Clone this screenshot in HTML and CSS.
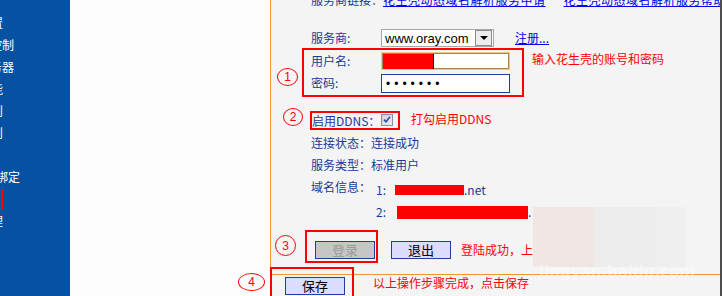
FILE: index.html
```html
<!DOCTYPE html>
<html lang="zh-CN">
<head>
<meta charset="utf-8">
<title>动态DNS</title>
<link rel="stylesheet" href="styles.css">
</head>
<body>
<div class="page">
  <nav class="sidebar">
    <div class="nav-item">无线设置</div>
    <div class="nav-item w14">家长控制</div>
    <div class="nav-item w14">DHCP服务器</div>
    <div class="nav-item">安全功能</div>
    <div class="nav-item">转发规则</div>
    <div class="nav-item">路由规则</div>
    <div class="nav-item"></div>
    <div class="nav-item w20">IP与MAC绑定</div>
    <div class="nav-item"><span class="nav-mark"></span></div>
    <div class="nav-item">系统管理</div>
  </nav>
  <div class="spacer"></div>
  <main class="panel">
    <div class="links-row">
      <span>服务商链接：</span><a class="link">花生壳动态域名解析服务申请</a><a class="link second">花生壳动态域名解析服务帮助</a>
    </div>

    <div class="row provider">
      <span class="label">服务商:</span>
      <div class="select"><span>www.oray.com</span><span class="select-btn"></span></div>
      <a class="link reg-link">注册...</a>
    </div>

    <div class="account-row">
      <div class="group account">
        <div class="field">
          <span class="label">用户名:</span>
          <div class="input focused"><span class="redact-input"></span><span class="caret"></span></div>
        </div>
        <div class="field">
          <span class="label">密码:</span>
          <div class="input pass"><span class="dots">•••••••</span></div>
        </div>
      </div>
      <span class="note account-note">输入花生壳的账号和密码</span>
    </div>

    <div class="ddns-row">
      <div class="group ddns">
        <span class="ddns-label">启用DDNS：</span>
        <svg class="checkbox" width="12" height="12" viewBox="0 0 12 12">
          <defs>
            <linearGradient id="cbg" x1="0" y1="0" x2="1" y2="1">
              <stop offset="0" stop-color="#c9d0dc"/>
              <stop offset="1" stop-color="#eef1f6"/>
            </linearGradient>
          </defs>
          <rect x="0.5" y="0.5" width="11" height="11" fill="url(#cbg)" stroke="#8e8f94"/>
          <path d="M3 5.6 L5 7.8 L9 2.8" fill="none" stroke="#2f4ea6" stroke-width="1.6"/>
        </svg>
      </div>
      <span class="note ddns-note">打勾启用DDNS</span>
    </div>

    <div class="info first">连接状态：连接成功</div>
    <div class="info">服务类型：标准用户</div>
    <div class="domain-row">
      <span class="domain-label">域名信息：</span>
      <div class="domain-list">
        <div class="domain-item"><span class="num">1:</span><span class="redact r1"></span><span>.net</span></div>
        <div class="domain-item"><span class="num n2">2:</span><span class="redact r2"></span><span>.</span></div>
      </div>
    </div>

    <div class="action-row">
      <div class="group login-box"><button class="btn disabled" type="button">登录</button></div>
      <button class="btn logout" type="button">退出</button>
      <span class="note action-note">登陆成功，上</span>
    </div>

    <div class="footer">
      <div class="group save-box"><button class="btn" type="button">保存</button></div>
      <span class="note save-note">以上操作步骤完成，点击保存</span>
    </div>

    <span class="circle c1">1</span>
    <span class="circle c2">2</span>
    <span class="circle c3">3</span>
    <span class="circle c4">4</span>
    <div class="watermark"></div>
    <span class="watermark-text">jingyan.baidu.com</span>
  </main>
</div>
</body>
</html>
```

FILE: styles.css
```css
html, body {
  margin: 0;
  padding: 0;
  overflow: hidden;
}
body {
  width: 722px;
  height: 296px;
  background: #fdfdfd;
  font-family: "Noto Sans CJK SC", sans-serif;
  font-size: 12px;
}
.page {
  display: flex;
  height: 296px;
}

/* sidebar */
.sidebar {
  width: 70px;
  flex: none;
  box-sizing: border-box;
  padding-top: 12px;
  background: #0651a1;
  color: #fff;
  overflow: hidden;
}
.nav-item {
  width: 3px;
  height: 22px;
  line-height: 22px;
  display: flex;
  justify-content: flex-end;
  align-items: center;
  white-space: nowrap;
}
.nav-item.w14 { width: 14px; }
.nav-item.w20 { width: 20px; }
.nav-mark {
  flex: none;
  width: 2px;
  height: 21px;
  margin-left: -1px;
  background: #ff0000;
}

.spacer {
  width: 200px;
  flex: none;
  background: #fdfdfd;
}

/* main panel */
.panel {
  position: relative;
  width: 449px;
  flex: none;
  background: #f4f4f4;
  border-left: 1px solid #f5962a;
  border-right: 2px solid #4d4d4d;
  color: #163a9a;
}
.links-row {
  margin: -8px 0 0 40px;
  height: 16px;
  line-height: 16px;
  white-space: nowrap;
  overflow: hidden;
}
.link {
  color: #0000ee;
  text-decoration: underline;
  letter-spacing: 0.5px;
}
.link.second { margin-left: 18px; }

.row {
  display: flex;
  align-items: flex-start;
  margin-left: 40px;
}
.label {
  width: 70px;
  flex: none;
  line-height: 18px;
}
.provider {
  margin-top: 21px;
  height: 19px;
}
.select {
  width: 113px;
  height: 18px;
  box-sizing: border-box;
  border: 1px solid #a7a7a7;
  background: #fff;
  display: flex;
  align-items: center;
  justify-content: space-between;
  padding: 0 1px 0 3px;
  font-family: "Liberation Sans", sans-serif;
  font-size: 13px;
  color: #000;
}
.select-btn {
  width: 17px;
  height: 16px;
  box-sizing: border-box;
  border: 1px solid #8c8c8c;
  background: #ececec;
  display: flex;
  align-items: center;
  justify-content: center;
}
.select-btn::after {
  content: "";
  border-left: 4px solid transparent;
  border-right: 4px solid transparent;
  border-top: 4px solid #000;
}
.reg-link {
  margin-left: 21px;
  line-height: 18px;
  letter-spacing: 0;
}

/* annotation groups */
.group {
  border: 2px solid #ff0000;
  box-sizing: border-box;
}
.note {
  color: #ff0000;
  line-height: 16px;
  white-space: nowrap;
}

.account-row {
  display: flex;
  align-items: flex-start;
  margin-left: 31px;
}
.account {
  width: 222px;
  height: 49px;
  padding: 2px 0 0 7px;
}
.field {
  display: flex;
  height: 18px;
}
.field + .field {
  margin-top: 4px;
  height: 19px;
}
.input {
  width: 129px;
  height: 100%;
  box-sizing: border-box;
  background: #fff;
  border: 1px solid #1c3ca6;
  display: flex;
  align-items: center;
}
.input.focused {
  border: 1px solid #f0c680;
  box-shadow: inset 0 0 0 1px #a88450;
  padding-left: 1px;
}
.redact-input {
  width: 50px;
  height: 15px;
  background: #ff0000;
}
.caret {
  width: 1px;
  height: 15px;
  background: #000;
}
.dots {
  padding-left: 4px;
  font-family: "Liberation Sans", sans-serif;
  font-size: 12px;
  letter-spacing: 4px;
  color: #000;
}
.account-note {
  margin: 3px 0 0 8px;
}

.ddns-row {
  display: flex;
  align-items: flex-start;
  margin: 14px 0 0 39px;
}
.ddns {
  width: 90px;
  height: 19px;
  display: flex;
  align-items: center;
}
.ddns-label {
  width: 69px;
  flex: none;
  line-height: 15px;
}
.checkbox {
  flex: none;
  margin-top: -2px;
}
.ddns-note {
  margin-left: 11px;
}

.info {
  margin-left: 40px;
  line-height: 22px;
}
.info.first { margin-top: 2px; }

.domain-row {
  display: flex;
  align-items: flex-start;
  margin-left: 40px;
}
.domain-label {
  width: 65px;
  flex: none;
  line-height: 22px;
}
.domain-list {
  margin-top: 2px;
}
.domain-item {
  display: flex;
  align-items: center;
  height: 22px;
}
.num {
  width: 19px;
  flex: none;
}
.num.n2 { width: 21px; }
.redact {
  flex: none;
  background: #ff0000;
}
.r1 { width: 69px; height: 10px; margin-top: 2px; }
.r2 { width: 131px; height: 13px; margin-top: 2px; }

.action-row {
  display: flex;
  align-items: flex-start;
  margin: 8px 0 0 34px;
}
.login-box {
  width: 73px;
  height: 33px;
  padding: 9px 0 0 8px;
}
.btn {
  display: block;
  width: 60px;
  height: 18px;
  box-sizing: border-box;
  margin: 0;
  padding: 0;
  border: 1px solid #1d3fa3;
  background: #dcdcfc;
  color: #000;
  font-family: "Noto Sans CJK SC", sans-serif;
  font-size: 13px;
  line-height: 16px;
  text-align: center;
}
.btn.disabled {
  background: #c6c6c6;
  color: #9a9a9a;
}
.logout {
  margin: 11px 0 0 13px;
}
.action-note {
  margin: 11px 0 0 10px;
  line-height: 18px;
}

.footer {
  display: flex;
  align-items: flex-start;
  margin-top: 11px;
  border-top: 1px solid #f5962a;
}
.save-box {
  width: 84px;
  height: 31px;
  margin: -8px 0 0 -1px;
  padding: 8px 0 0 13px;
}
.save-note {
  margin-left: 19px;
}

/* overlays: hand-drawn annotation circles and watermark */
.circle {
  position: absolute;
  box-sizing: border-box;
  border: 1px solid #ff0000;
  border-radius: 50%;
  color: #ff0000;
  font-family: "Liberation Sans", sans-serif;
  font-size: 12px;
  display: flex;
  align-items: center;
  justify-content: center;
}
.c1 { left: 6px; top: 68px; width: 21px; height: 18px; }
.c2 { left: 12px; top: 108px; width: 20px; height: 18px; }
.c3 { left: 4px; top: 235px; width: 21px; height: 21px; }
.c4 { left: -33px; top: 273px; width: 27px; height: 18px; }

.watermark {
  position: absolute;
  left: 262px;
  top: 207px;
  width: 152px;
  height: 60px;
  background: linear-gradient(to right, #f0e7e5 0, #f0e7e5 61px, #eeeded 61px, #eeeded 122px, #efefef 122px);
}
.watermark-text {
  position: absolute;
  left: 268px;
  top: 263px;
  font-family: "DejaVu Sans", sans-serif;
  font-size: 15px;
  font-weight: bold;
  color: rgba(255, 255, 255, 0.4);
  white-space: nowrap;
}
```
